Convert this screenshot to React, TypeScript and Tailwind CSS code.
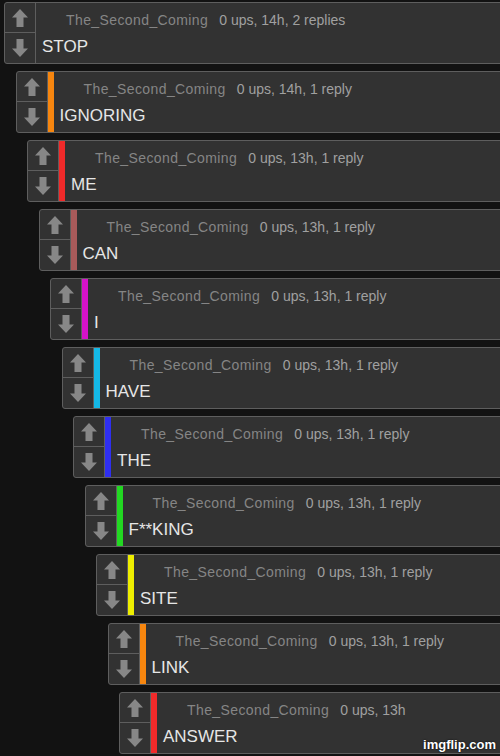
import type { ReactNode } from 'react';

interface Reply {
  text: string;
  age: string;
  bar?: string;
}

// Thread data, outermost first
const THREAD: Reply[] = [
  { text: 'STOP', age: '14h' },
  { text: 'IGNORING', age: '14h', bar: 'bg-[#f7860f]' },
  { text: 'ME', age: '13h', bar: 'bg-[#f02a2a]' },
  { text: 'CAN', age: '13h', bar: 'bg-[#a85a5a]' },
  { text: 'I', age: '13h', bar: 'bg-[#d613c9]' },
  { text: 'HAVE', age: '13h', bar: 'bg-[#14b8e6]' },
  { text: 'THE', age: '13h', bar: 'bg-[#2f2ff0]' },
  { text: 'F**KING', age: '13h', bar: 'bg-[#22d822]' },
  { text: 'SITE', age: '13h', bar: 'bg-[#eeee00]' },
  { text: 'LINK', age: '13h', bar: 'bg-[#f7860f]' },
  { text: 'ANSWER', age: '13h', bar: 'bg-[#f02a2a]' },
];

function Arrow({ down = false }: { down?: boolean }) {
  return (
    <svg width="16" height="18" viewBox="0 0 16 18" className={down ? 'rotate-180' : ''}>
      <path d="M8 0 L16 8.5 L11.5 8.5 L11.5 18 L4.5 18 L4.5 8.5 L0 8.5 Z" fill="#878787" />
    </svg>
  );
}

function VoteColumn() {
  return (
    <div className="flex w-[31px] shrink-0 flex-col border-r border-[#5e5e5e]">
      <div className="flex h-[30px] items-center justify-center border-b border-[#5e5e5e]">
        <Arrow />
      </div>
      <div className="flex flex-1 items-center justify-center">
        <Arrow down />
      </div>
    </div>
  );
}

function replyLabel(count: number) {
  if (count === 0) return '';
  return count === 1 ? ', 1 reply' : `, ${count} replies`;
}

function Comment({ reply, replies, children }: { reply: Reply; replies: number; children?: ReactNode }) {
  return (
    <div>
      <div className="flex h-[62px] w-[620px] rounded-[3px] border border-[#5e5e5e] bg-[#323232]">
        <VoteColumn />
        {reply.bar && <div className={`w-[6px] shrink-0 ${reply.bar}`} />}
        <div className="flex flex-col pl-[6px]">
          <div className="mt-[7px] flex h-[20px] items-center whitespace-nowrap">
            <span className="ml-[24px] text-[14px] tracking-[0.4px] text-[#858585]">The_Second_Coming</span>
            <span className="ml-[11px] text-[14px] text-[#a0a0a0]">
              0 ups, {reply.age}
              {replyLabel(replies)}
            </span>
          </div>
          <div className="mt-[7px] h-[20px] text-[17px] leading-[20px] text-[#e6e6e6]">{reply.text}</div>
        </div>
      </div>
      {children && <div className="ml-[11.5px] mt-[7px]">{children}</div>}
    </div>
  );
}

function renderThread(index: number): ReactNode {
  if (index >= THREAD.length) return null;
  const replies = index === 0 ? 2 : index < THREAD.length - 1 ? 1 : 0;
  return (
    <Comment reply={THREAD[index]} replies={replies}>
      {renderThread(index + 1)}
    </Comment>
  );
}

export default function App() {
  return (
    <div
      className="relative h-[756px] w-[500px] overflow-hidden bg-[#121212] pl-[4px] pt-[2px]"
      style={{ fontFamily: '"Liberation Sans", Arial, sans-serif' }}
    >
      {renderThread(0)}
      <div className="absolute bottom-[2px] right-[4px] text-[13px] font-bold text-white [text-shadow:0_0_2px_#000]">
        imgflip.com
      </div>
    </div>
  );
}
